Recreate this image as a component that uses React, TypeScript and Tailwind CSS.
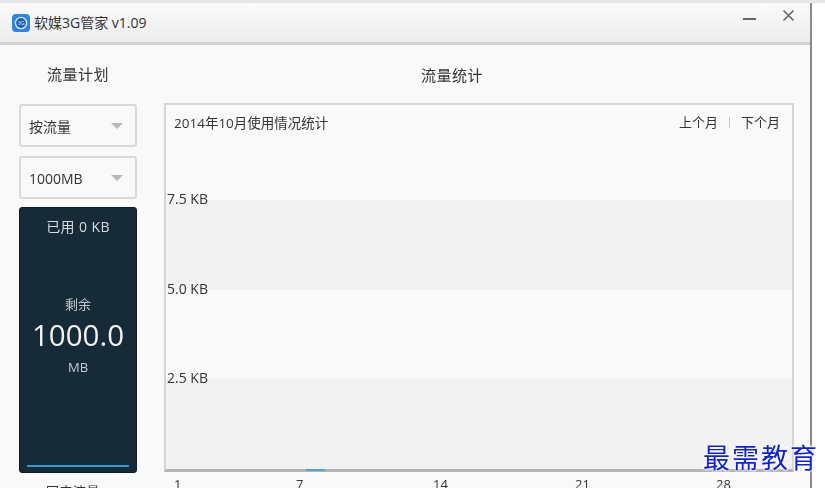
const FONT = "font-['Open_Sans','Noto_Sans_CJK_SC',sans-serif]";

const BANDS = [
  { label: "7.5 KB", className: "bg-[#f2f2f2]" },
  { label: "5.0 KB", className: "bg-[#fafafa]" },
  { label: "2.5 KB", className: "bg-[#f2f2f2]" },
];

const AXIS = [
  { label: "1", width: "w-[122px]" },
  { label: "7", width: "w-[137px]" },
  { label: "14", width: "w-[142px]" },
  { label: "21", width: "w-[141px]" },
  { label: "28", width: "w-[40px]" },
];

function Select({ label }: { label: string }) {
  return (
    <div className="h-[43px] flex items-center justify-between pl-[8px] pr-[12px] rounded-[3px] border-2 border-[#d9d9d9] bg-[#f9f9f9] text-[14px] text-[#333]">
      <span className="pt-[1px]">{label}</span>
      <span className="w-0 h-0 border-x-[6px] border-x-transparent border-t-[6px] border-t-[#b8b8b8]" />
    </div>
  );
}

function AppIcon() {
  return (
    <svg width="18" height="18" viewBox="0 0 18 18">
      <rect width="18" height="18" rx="4" fill="#2a85ea" />
      <circle cx="9" cy="9" r="5.6" fill="#1f5fae" stroke="#dcecfb" strokeWidth="1.4" />
      <text x="9" y="11" textAnchor="middle" fontSize="5.5" fill="#dcecfb">3G</text>
    </svg>
  );
}

export default function App() {
  return (
    <div className={`${FONT} relative w-[825px] h-[488px] overflow-hidden bg-white`}>
      <div className="h-[3px] bg-[#e6e6e6]" />
      <div className="w-[812px] h-[485px] flex flex-col border-r-2 border-[#8a8a8a] bg-[#f9f9f9] blur-[0.4px]">
        {/* title bar */}
        <div className="h-[42px] shrink-0 flex items-center pl-3 pr-[15px] border-b-[3px] border-[#d2d2d2] bg-gradient-to-b from-[#fbfbfb] to-[#ececec]">
          <AppIcon />
          <span className="ml-[4px] text-[14px] text-[#333]">软媒3G管家 v1.09</span>
          <div className="ml-auto self-start pt-[6px] flex items-start gap-[26px]">
            <span className="w-[13px] h-[2px] mt-[9px] bg-[#666]" />
            <svg width="13" height="13" viewBox="0 0 13 13">
              <path d="M1.5 1.5 L11.5 11.5 M11.5 1.5 L1.5 11.5" stroke="#666" strokeWidth="1.6" fill="none" />
            </svg>
          </div>
        </div>

        <div className="flex-1 flex min-h-0 pl-[19px]">
          {/* left column */}
          <div className="w-[118px] shrink-0 flex flex-col">
            <div className="h-[59px] shrink-0 flex items-center justify-center text-[15px] tracking-[0.5px] text-[#333]">
              流量计划
            </div>
            <div className="flex flex-col gap-[9px]">
              <Select label="按流量" />
              <Select label="1000MB" />
            </div>
            <div className="mt-[8px] h-[266px] shrink-0 flex flex-col items-center rounded-[3px] border border-[#0e1c26] bg-[#162a38] text-[#d8dde0]">
              <div className="mt-[8px] text-[14px] tracking-[0.4px]">已用 0 KB</div>
              <div className="mt-[58px] text-[13px] text-[#c4cbd0]">剩余</div>
              <div className="mt-[2px] text-[29.5px] leading-[36px] text-[#f2f2f2]">1000.0</div>
              <div className="mt-[5px] text-[13px] text-[#c4cbd0]">MB</div>
              <div className="mt-auto mb-[5px] w-[102px] h-[2px] bg-[#2a9bd8]" />
            </div>
            <div className="mt-[9px] pr-[10px] text-center text-[13px] tracking-[0.5px] text-[#333]">国内流量</div>
          </div>

          {/* right column */}
          <div className="w-[630px] ml-[27px] shrink-0 flex flex-col">
            <div className="h-[58px] shrink-0 flex items-center justify-center pr-[54px] pt-[2px] text-[15px] tracking-[0.5px] text-[#333]">
              流量统计
            </div>
            <div className="h-[369px] shrink-0 flex flex-col border-2 border-b-[3px] border-[#d4d4d4] border-b-[#b4b4b4] bg-[#fafafa]">
              <div className="h-[95px] shrink-0 flex items-start justify-between pt-[8px] pl-[8px] pr-[12px] text-[13.5px] text-[#333]">
                <span>2014年10月使用情况统计</span>
                <div className="flex items-center text-[13px]">
                  <span>上个月</span>
                  <span className="mx-[11px] w-px h-[11px] bg-[#c4c4d0]" />
                  <span>下个月</span>
                </div>
              </div>
              {BANDS.map((band) => (
                <div key={band.label} className={`flex-1 ${band.className}`}>
                  <div className="-mt-[10px] pl-[1px] text-[14px] leading-[18px] text-[#333]">{band.label}</div>
                </div>
              ))}
            </div>
            <div className="flex text-[13px] text-[#333] pl-[10px] pt-[3px]">
              {AXIS.map((tick) => (
                <span key={tick.label} className={`${tick.width} shrink-0`}>{tick.label}</span>
              ))}
            </div>
          </div>
        </div>
      </div>

      {/* blue marker on the axis */}
      <div className="absolute left-[306px] top-[469px] w-[19px] h-[2px] bg-[#4da3e8]" />

      {/* watermark */}
      <div className="absolute left-[703px] top-[441px] text-[27px] leading-[32px] tracking-[2px] text-[#0a1fe0] font-['Noto_Sans_CJK_SC',sans-serif] [text-shadow:0_0_3px_#fff,0_0_3px_#fff,0_0_3px_#fff]">
        最需教育
      </div>
    </div>
  );
}
